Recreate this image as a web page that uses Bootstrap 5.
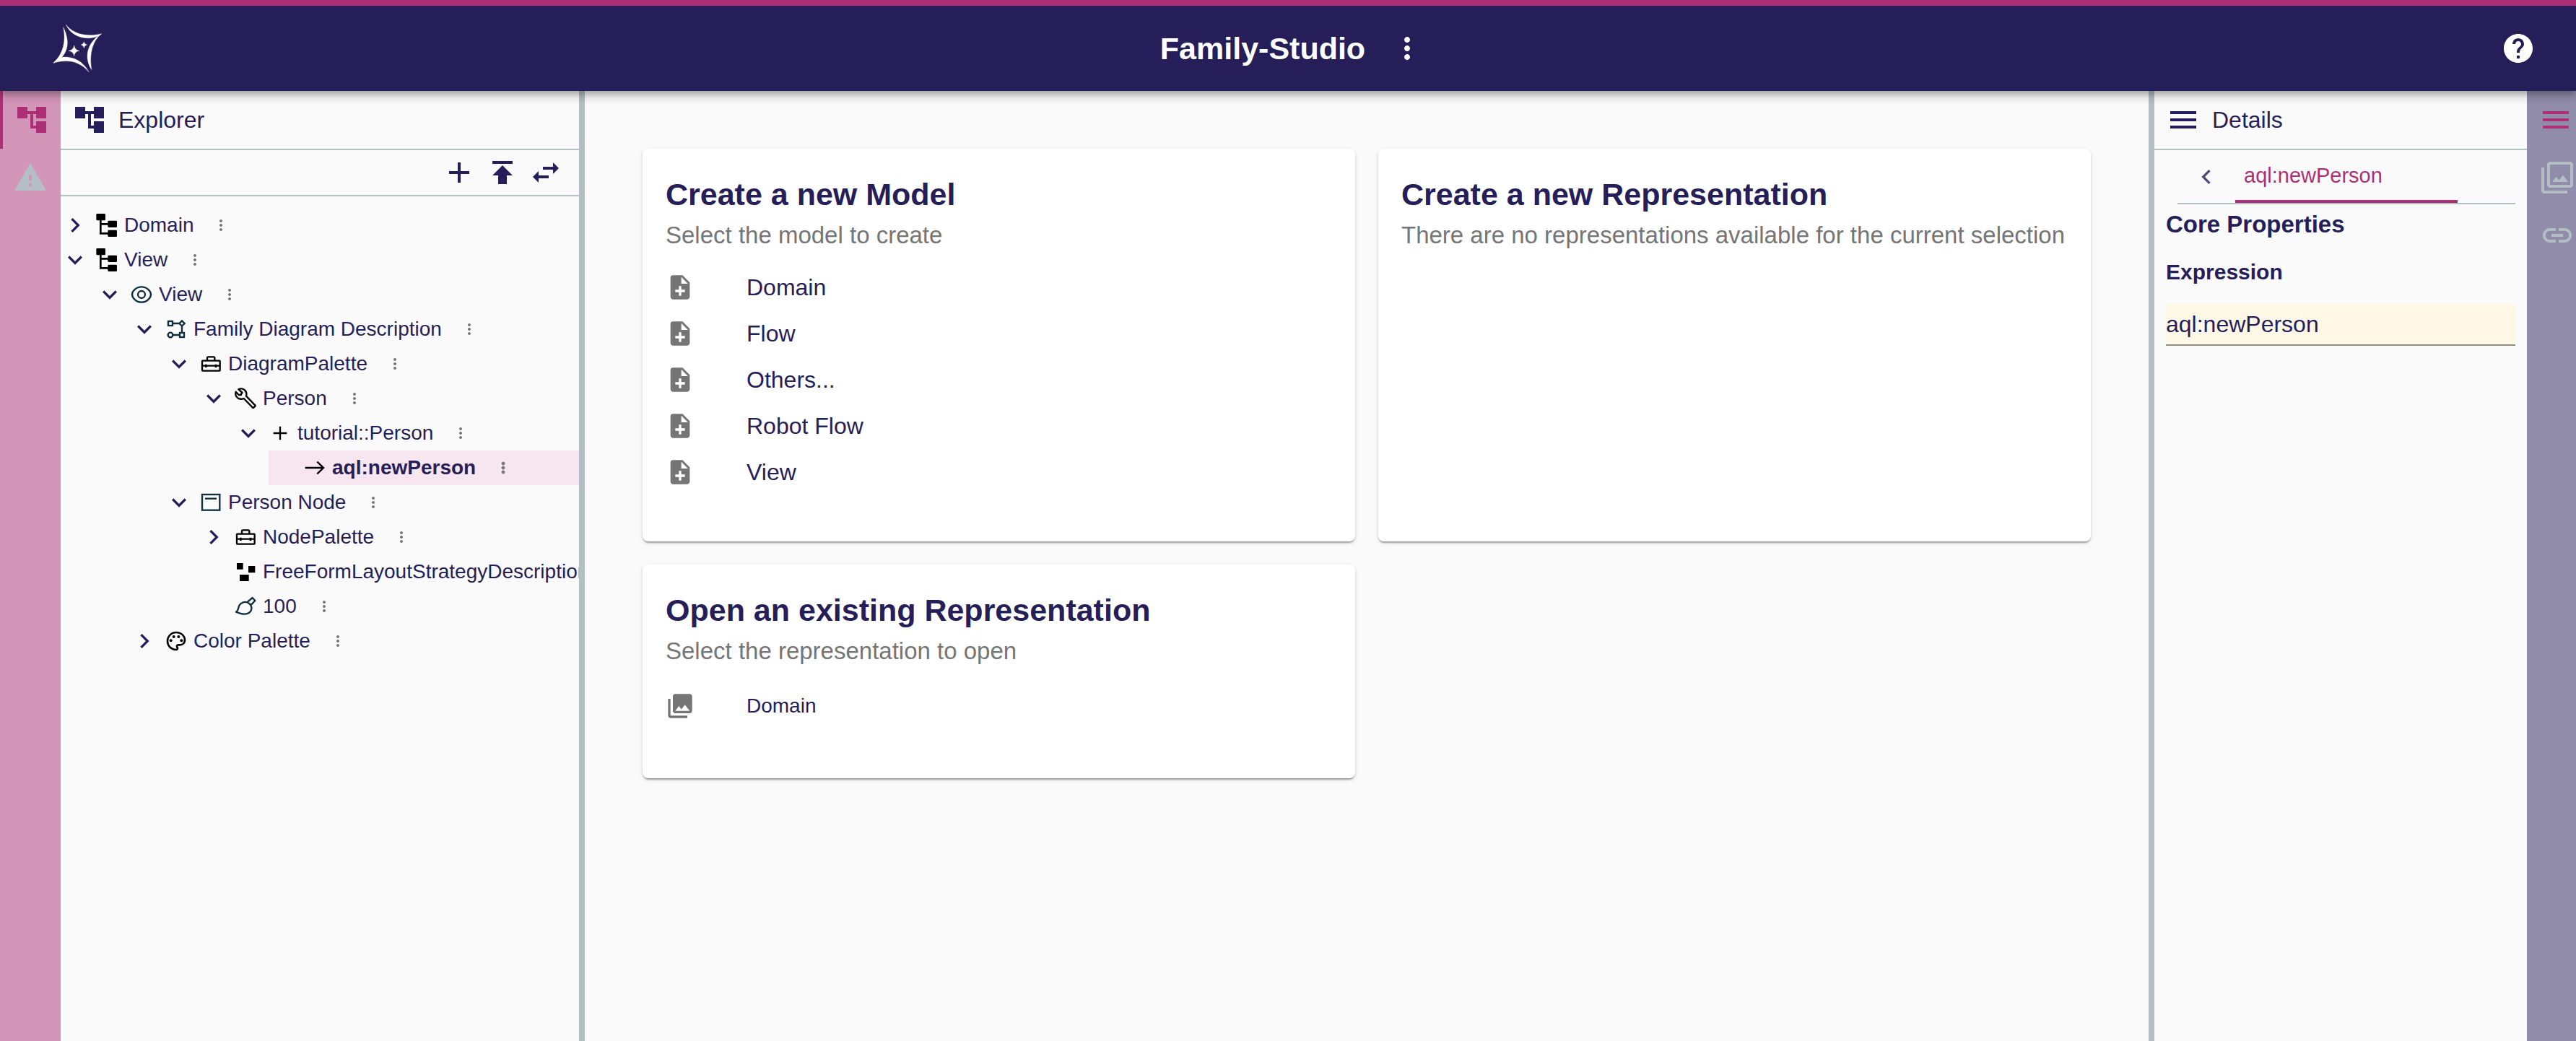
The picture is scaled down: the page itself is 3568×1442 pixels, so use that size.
<!DOCTYPE html>
<html lang="en">
<head>
<meta charset="utf-8">
<meta name="viewport" content="width=device-width, initial-scale=1">
<title>Family-Studio</title>
<link rel="stylesheet" href="https://cdn.jsdelivr.net/npm/bootstrap@5.3.0/dist/css/bootstrap.min.css">
<style>
:root{--navy:#261e58;--pink:#ad3077;--line:#b3bfc3}
body{font-family:"Liberation Sans",Arial,sans-serif;font-size:32px;line-height:48px;color:var(--navy);background:#fafafa}
svg{display:block;flex:none;fill:currentColor}
.i48{width:48px;height:48px}.i40{width:40px;height:40px}.i32{width:32px;height:32px}.i24{width:24px;height:24px}
button.plain{border:0;padding:0;background:none;color:inherit;display:flex;align-items:center;justify-content:center;flex:none}
.app-header{display:grid;grid-template-columns:1fr auto 1fr;align-items:center;height:126px;border-top:8px solid var(--pink);background:var(--navy);color:#fff;padding:0 56px;z-index:5;position:relative;
 box-shadow:0 4px 8px -2px rgba(0,0,0,.2),0 8px 10px rgba(0,0,0,.14),0 2px 20px rgba(0,0,0,.12)}
.home-link{padding-left:16px}
.app-logo{width:70px;height:68px;stroke:currentColor;stroke-width:1}
.app-title{font-size:43px;line-height:56px;font-weight:700;margin:0}
.title-group{gap:34px;margin-right:-12px}
.rail{flex:none;overflow:hidden;color:#b3bfc5}
.rail button.plain{width:84px;height:80px}
.rail-left{width:84px;background:#d395b8}
.rail-left .current{border-left:4px solid var(--pink);color:var(--pink)}
.rail-right{width:68px;background:#908ca9}
.rail-right .current{border-right:4px solid var(--pink);color:var(--pink)}
.explorer{width:718px;flex:none;overflow:hidden}
.details{width:516px;flex:none}
.splitter{width:8px;flex:none;background:#b3bfc5}
.panel-head{height:82px;border-bottom:2px solid var(--line);padding:0 16px;gap:16px}
.panel-head h2{font-size:32px;line-height:48px;font-weight:400;margin:0}
.panel-tools{height:64px;border-bottom:2px solid var(--line);padding:0 22px;gap:12px}
.tree{padding-top:16px;font-size:28px}
.tree ul{padding-left:48px}
.tree-row{display:flex;align-items:center;height:48px;gap:8px;white-space:nowrap}
.tree-row .more{color:#757575;margin-left:18px}
.tree-row .leaf{width:40px;flex:none}
.tree-row .ink{color:#000}.tree-row .teal{color:#0f2f3e}
.tree-row.chosen{background:#f7e6ef;font-weight:700}
.tree-row.chosen .more svg{stroke:#757575;stroke-width:1}
.stroked{fill:none;stroke:currentColor;stroke-width:7}
.work{padding:80px}
.work-grid{display:grid;grid-template-columns:1fr 1fr;gap:32px;align-items:stretch}
.panel-card{background:#fff;border-radius:8px;padding:32px 32px 64px;box-shadow:0 4px 2px -2px rgba(0,0,0,.2),0 2px 2px rgba(0,0,0,.14),0 2px 6px rgba(0,0,0,.12)}
.panel-card h2{font-size:43px;line-height:62px;font-weight:700;margin:0 0 2px}
.panel-card p{font-size:33px;color:#757575;margin:0 0 16px}
.entry{display:flex;align-items:center;gap:72px;height:64px;color:var(--navy);text-decoration:none}
.entry svg{color:#757575}
.entry-dense{height:72px;font-size:28px}
.tabs{margin:0 16px 0 32px;height:75px;border-bottom:2px solid var(--line)}
.tabs .tab-nav{width:80px;opacity:.8}
.tabs button.tab-item{flex:1;justify-content:flex-start;padding:0 12px;color:var(--pink);font-size:29px;border-bottom:4px solid var(--pink)}
.tabs .tab-end{width:80px}
.props{padding:4px 16px}
.props h3{font-size:33px;line-height:48px;font-weight:700;margin:0 0 18px}
.props label{display:block;font-size:30px;line-height:48px;font-weight:700;margin-bottom:20px}
.props .form-control{height:58px;padding:0;border:0;border-bottom:2px solid #8f8e80;border-radius:0;background:#fff8e6;color:var(--navy);font-size:32px;line-height:48px}
</style>
</head>
<body class="min-vh-100 d-flex flex-column">
<svg class="d-none" aria-hidden="true">
<symbol id="tree" viewBox="0 0 24 24"><path d="M22 11V3h-7v3H9V3H2v8h7V8h2v10h4v3h7v-8h-7v3h-2V8h2v3z"/></symbol>
<symbol id="warn" viewBox="0 0 24 24"><path d="M1 21h22L12 2 1 21zm12-3h-2v-2h2v2zm0-4h-2v-4h2v4z"/></symbol>
<symbol id="menu" viewBox="0 0 24 24"><path d="M3 18h18v-2H3v2zm0-5h18v-2H3v2zm0-7v2h18V6H3z"/></symbol>
<symbol id="pics" viewBox="0 0 24 24"><path d="M15.96 10.29l-2.75 3.54-1.96-2.36L8.5 15h11l-3.54-4.71zM3 5H1v16c0 1.1.9 2 2 2h16v-2H3V5zm18-4H7c-1.1 0-2 .9-2 2v14c0 1.1.9 2 2 2h14c1.1 0 2-.9 2-2V3c0-1.1-.9-2-2-2zm0 16H7V3h14v14z"/></symbol>
<symbol id="link" viewBox="0 0 24 24"><path d="M3.9 12c0-1.71 1.39-3.1 3.1-3.1h4V7H7c-2.76 0-5 2.24-5 5s2.24 5 5 5h4v-1.9H7c-1.71 0-3.1-1.39-3.1-3.1zM8 13h8v-2H8v2zm9-6h-4v1.9h4c1.71 0 3.1 1.39 3.1 3.1s-1.39 3.1-3.1 3.1h-4V17h4c2.76 0 5-2.24 5-5s-2.24-5-5-5z"/></symbol>
<symbol id="dots" viewBox="0 0 24 24"><path d="M12 8c1.1 0 2-.9 2-2s-.9-2-2-2-2 .9-2 2 .9 2 2 2zm0 2c-1.1 0-2 .9-2 2s.9 2 2 2 2-.9 2-2-.9-2-2-2zm0 6c-1.1 0-2 .9-2 2s.9 2 2 2 2-.9 2-2-.9-2-2-2z"/></symbol>
<symbol id="right" viewBox="0 0 24 24"><path d="M10 6L8.59 7.41 13.17 12l-4.58 4.59L10 18l6-6z"/></symbol>
<symbol id="left" viewBox="0 0 24 24"><path d="M15.41 7.41L14 6l-6 6 6 6 1.41-1.41L10.83 12z"/></symbol>
<symbol id="down" viewBox="0 0 24 24"><path d="M16.59 8.59L12 13.17 7.41 8.59 6 10l6 6 6-6z"/></symbol>
<symbol id="file" viewBox="0 0 24 24"><path d="M14 2H6c-1.1 0-1.99.9-1.99 2L4 20c0 1.1.89 2 1.99 2H18c1.1 0 2-.9 2-2V8l-6-6zm2 14h-3v3h-2v-3H8v-2h3v-3h2v3h3v2zm-3-7V3.5L18.5 9H13z"/></symbol>
<symbol id="library" viewBox="0 0 24 24"><path d="M22 16V4c0-1.1-.9-2-2-2H8c-1.1 0-2 .9-2 2v12c0 1.1.9 2 2 2h12c1.1 0 2-.9 2-2zm-11-4l2.03 2.71L16 11l4 5H8l3-4zM2 6v14c0 1.1.9 2 2 2h14v-2H4V6H2z"/></symbol>
<symbol id="model" viewBox="0 0 96 96"><rect x="4" width="38" height="28" rx="4"/><rect x="52" y="29" width="38" height="28" rx="4"/><rect x="52" y="68" width="38" height="28" rx="4"/><path d="M22 24v58h34M22 43h34" fill="none" stroke="currentColor" stroke-width="8"/></symbol>
<symbol id="box" viewBox="0 0 96 96"><g class="stroked"><rect x="12" y="35" width="74" height="42" rx="2"/><path d="M33 35V23q0-4 4-4h23q4 0 4 4v12M12 56h74"/><path d="M28 50v13M69 50v13" stroke-width="8"/></g></symbol>
</svg>

<header class="app-header">
 <a href="#" aria-label="Home" class="text-white home-link"><svg class="app-logo" viewBox="215 98 210 204"><path d="M273 101C296 132 345 157 421 139 C393 166 304 170 273 101Z"/><path d="M421 139C378 172 370 235 380 289 C352 248 355 190 403 151Z"/><path d="M262 112C274 170 262 222 221 261 L245 247C286 213 288 165 262 112Z"/><path d="M221 261C272 246 325 248 368 298 C338 240 278 228 240 241Z"/><path d="M307 187Q310 207 329 210Q310 213 307 232Q304 213 284 210Q304 207 307 187ZM348 172Q350 183 361 185Q350 187 348 199Q346 187 335 185Q346 183 348 172Z"/></svg></a>
 <div class="title-group d-flex align-items-center">
  <h1 class="app-title">Family-Studio</h1>
  <button class="plain" aria-label="More"><svg class="i48"><use href="#dots"/></svg></button>
 </div>
 <div class="d-flex justify-content-end"><button class="plain" aria-label="Help"><svg class="i48" viewBox="0 0 24 24"><path d="M12 2C6.48 2 2 6.48 2 12s4.48 10 10 10 10-4.48 10-10S17.52 2 12 2zm1 17h-2v-2h2v2zm2.07-7.75l-.9.92C13.45 12.9 13 13.5 13 15h-2v-.5c0-1.1.45-2.1 1.17-2.83l1.24-1.26c.37-.36.59-.86.59-1.41 0-1.1-.9-2-2-2s-2 .9-2 2H8c0-2.21 1.79-4 4-4s4 1.79 4 4c0 .88-.36 1.68-.93 2.25z"/></svg></button></div>
</header>

<div class="d-flex flex-grow-1">
 <nav class="rail rail-left" aria-label="Left views">
  <button class="plain current" aria-label="Explorer"><svg class="i48"><use href="#tree"/></svg></button>
  <button class="plain" aria-label="Validation"><svg class="i48"><use href="#warn"/></svg></button>
 </nav>

 <aside class="explorer">
  <div class="panel-head d-flex align-items-center"><svg class="i48"><use href="#tree"/></svg><h2>Explorer</h2></div>
  <div class="panel-tools d-flex align-items-center justify-content-end">
   <button class="plain" aria-label="New"><svg class="i48" viewBox="0 0 24 24"><path d="M19 13h-6v6h-2v-6H5v-2h6V5h2v6h6v2z"/></svg></button>
   <button class="plain" aria-label="Upload"><svg class="i48" viewBox="0 0 24 24"><path d="M5 4v2h14V4H5zm0 10h4v6h6v-6h4l-7-7-7 7z"/></svg></button>
   <button class="plain" aria-label="Synchronize"><svg class="i48" viewBox="0 0 24 24"><path d="M6.99 11L3 15l3.99 4v-3H14v-2H6.99v-3zM21 9l-3.99-4v3H10v2h7.01v3L21 9z"/></svg></button>
  </div>
  <div class="tree">
   <div class="tree-row"><button class="plain" aria-label="Expand"><svg class="i40"><use href="#right"/></svg></button><svg class="i32 ink"><use href="#model"/></svg><span>Domain</span><button class="plain more" aria-label="More"><svg class="i24"><use href="#dots"/></svg></button></div>
   <div class="tree-row"><button class="plain" aria-label="Collapse"><svg class="i40"><use href="#down"/></svg></button><svg class="i32 ink"><use href="#model"/></svg><span>View</span><button class="plain more" aria-label="More"><svg class="i24"><use href="#dots"/></svg></button></div>
   <ul class="list-unstyled mb-0"><li>
    <div class="tree-row"><button class="plain" aria-label="Collapse"><svg class="i40"><use href="#down"/></svg></button><svg class="i32 teal" viewBox="0 0 96 96"><g class="stroked"><path d="M9 48C9 34 26 16 48 16S87 34 87 48S70 80 48 80S9 62 9 48Z"/><circle cx="48" cy="48" r="15"/></g></svg><span>View</span><button class="plain more" aria-label="More"><svg class="i24"><use href="#dots"/></svg></button></div>
    <ul class="list-unstyled"><li>
     <div class="tree-row"><button class="plain" aria-label="Collapse"><svg class="i40"><use href="#down"/></svg></button><svg class="i32 teal" viewBox="0 0 96 96"><g class="stroked"><rect x="15" y="15" width="18" height="18"/><path d="M72 13l11 11-11 11-11-11zM33 24h28M72 35v28M34 72h29"/><circle cx="24" cy="72" r="10"/><rect x="63" y="63" width="18" height="18"/></g></svg><span>Family Diagram Description</span><button class="plain more" aria-label="More"><svg class="i24"><use href="#dots"/></svg></button></div>
     <ul class="list-unstyled">
      <li><div class="tree-row"><button class="plain" aria-label="Collapse"><svg class="i40"><use href="#down"/></svg></button><svg class="i32 ink"><use href="#box"/></svg><span>DiagramPalette</span><button class="plain more" aria-label="More"><svg class="i24"><use href="#dots"/></svg></button></div>
       <ul class="list-unstyled"><li>
        <div class="tree-row"><button class="plain" aria-label="Collapse"><svg class="i40"><use href="#down"/></svg></button><svg class="i32 ink" viewBox="0 0 96 96"><g class="stroked" stroke-linejoin="round"><path d="M19 10C36 1 57 15 51 38L88 76q2 2 0 4l-6 6q-2 2-4 0L41 48C20 56 2 40 8 20L20 33h10v-4l5-5z"/></g></svg><span>Person</span><button class="plain more" aria-label="More"><svg class="i24"><use href="#dots"/></svg></button></div>
        <ul class="list-unstyled"><li>
         <div class="tree-row"><button class="plain" aria-label="Collapse"><svg class="i40"><use href="#down"/></svg></button><svg class="i32 ink" viewBox="0 0 96 96"><path class="stroked" d="M48 20v56M20 48h56"/></svg><span>tutorial::Person</span><button class="plain more" aria-label="More"><svg class="i24"><use href="#dots"/></svg></button></div>
         <ul class="list-unstyled"><li>
          <div class="tree-row chosen"><span class="leaf"></span><svg class="i32 ink" viewBox="0 0 96 96"><path class="stroked" d="M8 48h76M58 23l26 25-26 25"/></svg><span>aql:newPerson</span><button class="plain more" aria-label="More"><svg class="i24"><use href="#dots"/></svg></button></div>
         </li></ul>
        </li></ul>
       </li></ul>
      </li>
      <li><div class="tree-row"><button class="plain" aria-label="Collapse"><svg class="i40"><use href="#down"/></svg></button><svg class="i32 teal" viewBox="0 0 96 96"><g class="stroked"><rect x="12" y="15" width="73" height="65"/><path d="M24 32h48"/></g></svg><span>Person Node</span><button class="plain more" aria-label="More"><svg class="i24"><use href="#dots"/></svg></button></div>
       <ul class="list-unstyled">
        <li class="tree-row"><button class="plain" aria-label="Expand"><svg class="i40"><use href="#right"/></svg></button><svg class="i32 ink"><use href="#box"/></svg><span>NodePalette</span><button class="plain more" aria-label="More"><svg class="i24"><use href="#dots"/></svg></button></li>
        <li class="tree-row"><span class="leaf"></span><svg class="i32 ink" viewBox="0 0 96 96"><path d="M12 12h26v26H12zM60 24h28v28H60zM24 60h38v27H24z"/></svg><span>FreeFormLayoutStrategyDescription</span></li>
        <li class="tree-row"><span class="leaf"></span><svg class="i32 teal" viewBox="0 0 96 96"><g class="stroked" stroke-linejoin="round"><path d="M9 71C20 64 17 54 22 44C29 31 46 26 58 32C73 40 78 58 68 70C54 86 34 82 9 71ZM57 29L77 12L88 24L72 41"/></g></svg><span>100</span><button class="plain more" aria-label="More"><svg class="i24"><use href="#dots"/></svg></button></li>
       </ul>
      </li>
     </ul></li>
     <li class="tree-row"><button class="plain" aria-label="Expand"><svg class="i40"><use href="#right"/></svg></button><svg class="i32 ink" viewBox="0 0 24 24"><path d="M12 22C6.49 22 2 17.51 2 12S6.49 2 12 2s10 4.04 10 9c0 3.31-2.69 6-6 6h-1.77c-.28 0-.5.22-.5.5 0 .12.05.23.13.33.41.47.64 1.06.64 1.67 0 1.38-1.12 2.5-2.5 2.5zm0-18c-4.41 0-8 3.59-8 8s3.59 8 8 8c.28 0 .5-.22.5-.5 0-.16-.08-.28-.14-.35-.41-.46-.63-1.05-.63-1.65 0-1.38 1.12-2.5 2.5-2.5H16c2.21 0 4-1.79 4-4 0-3.86-3.59-7-8-7z"/><circle cx="6.5" cy="11.5" r="1.5"/><circle cx="9.5" cy="7.5" r="1.5"/><circle cx="14.5" cy="7.5" r="1.5"/><circle cx="17.5" cy="11.5" r="1.5"/></svg><span>Color Palette</span><button class="plain more" aria-label="More"><svg class="i24"><use href="#dots"/></svg></button></li>
    </ul>
   </li></ul>
  </div>
 </aside>
 <div class="splitter"></div>

 <main class="work flex-grow-1">
  <div class="work-grid">
   <section class="panel-card">
    <h2>Create a new Model</h2>
    <p>Select the model to create</p>
    <a href="#" class="entry"><svg class="i40"><use href="#file"/></svg>Domain</a>
    <a href="#" class="entry"><svg class="i40"><use href="#file"/></svg>Flow</a>
    <a href="#" class="entry"><svg class="i40"><use href="#file"/></svg>Others...</a>
    <a href="#" class="entry"><svg class="i40"><use href="#file"/></svg>Robot Flow</a>
    <a href="#" class="entry"><svg class="i40"><use href="#file"/></svg>View</a>
   </section>
   <section class="panel-card">
    <h2>Create a new Representation</h2>
    <p>There are no representations available for the current selection</p>
   </section>
   <section class="panel-card">
    <h2>Open an existing Representation</h2>
    <p>Select the representation to open</p>
    <a href="#" class="entry entry-dense"><svg class="i40"><use href="#library"/></svg>Domain</a>
   </section>
  </div>
 </main>

 <div class="splitter"></div>
 <aside class="details">
  <div class="panel-head d-flex align-items-center"><svg class="i48"><use href="#menu"/></svg><h2>Details</h2></div>
  <div class="tabs d-flex" role="tablist">
   <button class="plain tab-nav" aria-label="Previous"><svg class="i40"><use href="#left"/></svg></button>
   <button class="plain tab-item" role="tab" aria-selected="true">aql:newPerson</button>
   <span class="tab-end"></span>
  </div>
  <div class="props">
   <h3>Core Properties</h3>
   <label for="expression">Expression</label>
   <input id="expression" type="text" class="form-control" value="aql:newPerson">
  </div>
 </aside>
 <nav class="rail rail-right" aria-label="Right views">
  <button class="plain current" aria-label="Details"><svg class="i48"><use href="#menu"/></svg></button>
  <button class="plain" aria-label="Representations"><svg class="i48"><use href="#pics"/></svg></button>
  <button class="plain" aria-label="Related elements"><svg class="i48"><use href="#link"/></svg></button>
 </nav>
</div>
<script src="https://cdn.jsdelivr.net/npm/bootstrap@5.3.0/dist/js/bootstrap.bundle.min.js"></script>
</body>
</html>
